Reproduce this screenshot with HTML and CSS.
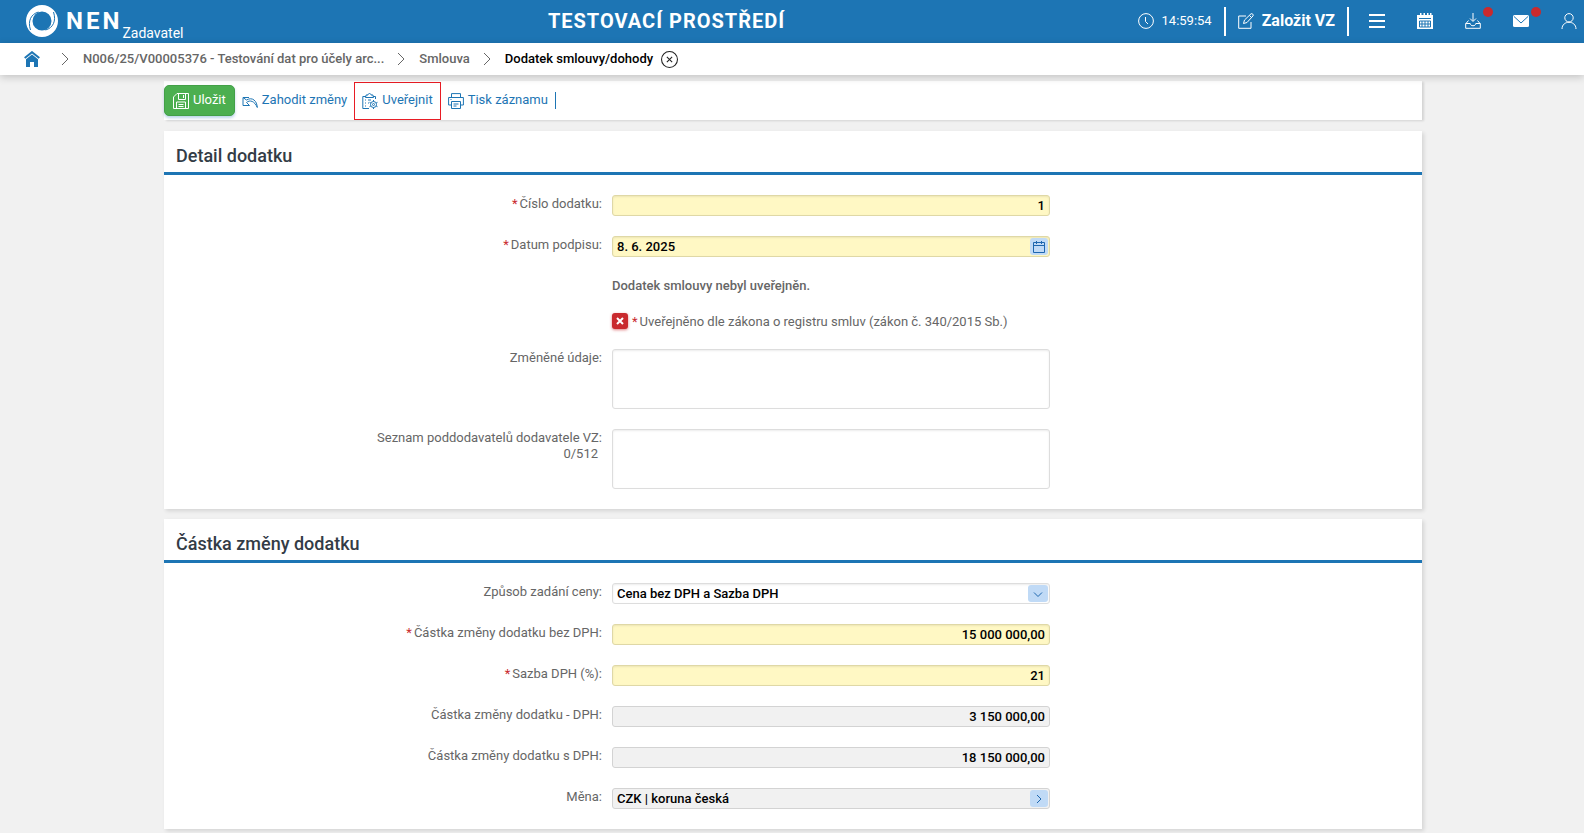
FILE: index.html
```html
<!DOCTYPE html>
<html lang="cs">
<head>
  <meta charset="UTF-8">
  <meta name="viewport" content="width=device-width, initial-scale=1.0">
  <title>Dodatek smlouvy/dohody - NEN</title>
  <link rel="stylesheet" href="styles.css">
</head>
<body>

<header class="topbar">
  <a href="#" class="brand">
    <svg class="brand-logo" viewBox="0 0 32 32" aria-hidden="true">
      <path fill="#fff" fill-rule="evenodd" d="M16 0a16 16 0 1 1 0 32a16 16 0 1 1 0-32zM16 6.500a9.500 9.500 0 1 0 0 19a9.500 9.500 0 1 0 0-19z"/>
      <path class="logo-cut" d="M4.500 25C1.500 16 5 9 12.500 7M27.500 7C30.500 16 27 23 19.500 25"/>
    </svg>
    <span class="brand-name">NEN</span>
    <span class="brand-role">Zadavatel</span>
  </a>

  <h1 class="env-title">TESTOVACÍ PROSTŘEDÍ</h1>

  <div class="clock">
    <svg class="icon" viewBox="0 0 16 16" aria-hidden="true">
      <circle cx="8" cy="8" r="7.400"/><path d="M7.500 4v4.500l2.500 2.500"/>
    </svg>
    <time>14:59:54</time>
  </div>

  <button type="button" class="create">
    <svg class="icon" viewBox="0 0 16 16" aria-hidden="true">
      <path d="M8 3H.7v12.300H13V9M5.500 10.500l1-3.500L13 .8c1-.8 3 1 2 2.100L9 9.500zM11.500 2.500l2 2"/>
    </svg>
    Založit VZ
  </button>

  <nav class="tools">
    <button type="button" class="tool" aria-label="Menu">
      <svg class="icon" viewBox="0 0 16 16"><path class="bars" d="M0 2h16M0 8h16M0 14h16"/></svg>
    </button>
    <button type="button" class="tool" aria-label="Kalendář">
      <svg class="icon" viewBox="0 0 16 16">
        <path class="solid" d="M0 2h3V0h1.500v2h2V0H8v2h2V0h1.500v2H13V0h1.500v2H16v14H0z"/>
        <path class="calendar-grid" d="M2 5.500h12M2.500 8v6h11V8zM2.500 11h11M5 8v6M8 8v6M11 8v6"/>
      </svg>
    </button>
    <button type="button" class="tool" aria-label="Stažené soubory">
      <svg class="icon" viewBox="0 0 16 16">
        <path d="M8 0v8M5 5.500l3 3 3-3M3.500 7.500l-2.500 3M12.500 7.500l2.500 3M.7 10.500h4.500c0 3 5.600 3 5.600 0h4.500v4.800H.7z"/>
      </svg>
      <span class="badge"></span>
    </button>
    <button type="button" class="tool" aria-label="Zprávy">
      <svg class="icon" viewBox="0 0 16 16">
        <rect class="solid" y="2" width="16" height="12" rx="1.500"/>
        <path class="flap" d="M1 3.500l7 6.500 7-6.500"/>
      </svg>
      <span class="badge"></span>
    </button>
    <button type="button" class="tool" aria-label="Uživatel">
      <svg class="icon" viewBox="0 0 16 16">
        <circle cx="8" cy="4.800" r="4.200"/><path d="M1 16c0-9 14-9 14 0"/>
      </svg>
    </button>
  </nav>
</header>

<nav class="breadcrumb" aria-label="Drobečková navigace">
  <a href="#" class="home" aria-label="Domů">
    <svg viewBox="0 0 16 16">
      <path class="home-roof" d="M.7 7L8 1.200 15.300 7"/>
      <path fill="#1d75b4" d="M2 8.300L8 3.500l6 4.800V16h-4v-5H6v5H2z"/>
    </svg>
  </a>
  <svg class="sep" viewBox="0 0 8 12" aria-hidden="true"><path d="M1 0l6 6-6 6"/></svg>
  <a href="#">N006/25/V00005376 - Testování dat pro účely arc...</a>
  <svg class="sep" viewBox="0 0 8 12" aria-hidden="true"><path d="M1 0l6 6-6 6"/></svg>
  <a href="#">Smlouva</a>
  <svg class="sep" viewBox="0 0 8 12" aria-hidden="true"><path d="M1 0l6 6-6 6"/></svg>
  <span class="current" aria-current="page">Dodatek smlouvy/dohody</span>
  <button type="button" class="close" aria-label="Zavřít">
    <svg viewBox="0 0 16 16"><circle cx="8" cy="8" r="7.500"/><path d="M5.500 5.500l5 5M10.500 5.500l-5 5"/></svg>
  </button>
</nav>

<main>
  <div class="toolbar">
    <button type="button" class="action save">
      <svg class="icon" viewBox="0 0 16 16" aria-hidden="true">
        <path d="M.5 4L4 .5h11.500v15H.5zM5.500 .5v6h7v-6M10.500 2v3M3.500 15.500V9h9v6.500M5.500 11.500h5M5.500 13.500h5"/>
      </svg>
      <span>Uložit</span>
    </button>
    <button type="button" class="action">
      <svg class="icon" viewBox="0 0 16 16" aria-hidden="true">
        <path d="M7 4.500H1v8h6.500L4.500 9.500C8 6.500 12.500 8 15.300 14.500C15 8 10.500 3.500 4.500 7L1 4.500"/>
      </svg>
      <span>Zahodit změny</span>
    </button>
    <button type="button" class="action highlighted">
      <svg class="icon" viewBox="0 0 16 16" aria-hidden="true">
        <path d="M7 15.500H.8v-12H4V2h2c0-2 3-2 3 0h2v1.500h2.500V6M3.500 3.500v1h8v-1M3 7h1M6 7h3M3 10h1M6 10h1M3 13h1"/>
        <circle cx="11.500" cy="11.500" r="3"/><circle cx="11.500" cy="11.500" r="1"/>
        <path d="M11.500 7v1.500M11.500 14.500V16M7.500 9.300l1.400.8M14.100 12.900l1.400.8M7.500 13.700l1.400-.8M14.100 10.100l1.400-.8"/>
      </svg>
      <span>Uveřejnit</span>
    </button>
    <button type="button" class="action">
      <svg class="icon" viewBox="0 0 16 16" aria-hidden="true">
        <path d="M3.500 4V.6h9V4M3.500 12H.6V4.500h14.800V12h-2.900M3.500 8.500h9v7h-9zM5.500 11h5M5.500 13h3M2.500 6.500h1"/>
      </svg>
      <span>Tisk záznamu</span>
    </button>
    <span class="toolbar-end"></span>
  </div>

  <form>
    <section class="panel">
      <h2>Detail dodatku</h2>
      <div class="fields">
        <div class="row">
          <label for="cislo"><i>*</i>Číslo dodatku:</label>
          <input type="text" id="cislo" class="required number" value="1">
        </div>
        <div class="row">
          <label for="datum"><i>*</i>Datum podpisu:</label>
          <div class="control">
            <input type="text" id="datum" class="required" value="8. 6. 2025">
            <button type="button" class="picker" aria-label="Vybrat datum">
              <svg viewBox="0 0 12 12"><path d="M.5 1.500h11v10H.5zM.5 4.500h11M3.500 0v3M8.500 0v3"/></svg>
            </button>
          </div>
        </div>
        <div class="row">
          <strong class="note">Dodatek smlouvy nebyl uveřejněn.</strong>
        </div>
        <div class="row">
          <div class="check">
            <span class="check-box">
              <input type="checkbox" id="registr">
              <svg viewBox="0 0 8 8" aria-hidden="true"><path d="M1 1l6 6M7 1L1 7"/></svg>
            </span>
            <label for="registr"><i>*</i>Uveřejněno dle zákona o registru smluv (zákon č. 340/2015 Sb.)</label>
          </div>
        </div>
        <div class="row">
          <label for="udaje">Změněné údaje:</label>
          <textarea id="udaje"></textarea>
        </div>
        <div class="row">
          <label for="seznam">Seznam poddodavatelů dodavatele VZ: <span class="counter">0/512</span></label>
          <textarea id="seznam" maxlength="512"></textarea>
        </div>
      </div>
    </section>

    <section class="panel">
      <h2>Částka změny dodatku</h2>
      <div class="fields">
        <div class="row">
          <label for="zpusob">Způsob zadání ceny:</label>
          <div class="control">
            <select id="zpusob">
              <option>Cena bez DPH a Sazba DPH</option>
            </select>
            <span class="picker picker-select">
              <svg viewBox="0 0 12 12"><path d="M2 4.500l4 4 4-4"/></svg>
            </span>
          </div>
        </div>
        <div class="row">
          <label for="bez-dph"><i>*</i>Částka změny dodatku bez DPH:</label>
          <input type="text" id="bez-dph" class="required number" value="15 000 000,00">
        </div>
        <div class="row">
          <label for="sazba"><i>*</i>Sazba DPH (%):</label>
          <input type="text" id="sazba" class="required number" value="21">
        </div>
        <div class="row">
          <label for="dph">Částka změny dodatku - DPH:</label>
          <input type="text" id="dph" class="number" value="3 150 000,00" readonly>
        </div>
        <div class="row">
          <label for="s-dph">Částka změny dodatku s DPH:</label>
          <input type="text" id="s-dph" class="number" value="18 150 000,00" readonly>
        </div>
        <div class="row">
          <label for="mena">Měna:</label>
          <div class="control">
            <input type="text" id="mena" value="CZK | koruna česká" readonly>
            <button type="button" class="picker" aria-label="Detail měny">
              <svg viewBox="0 0 12 12"><path d="M4 2l4 4-4 4"/></svg>
            </button>
          </div>
        </div>
      </div>
    </section>
  </form>
</main>

</body>
</html>
```
FILE: styles.css
```css
* { box-sizing: border-box }

body {
  margin: 0;
  background: #f1f1f1;
  color: #666;
  font-family: Roboto, Arial, sans-serif;
  font-size: 13px;
  line-height: 16px;
}

a {
  color: inherit;
  text-decoration: none;
}

button {
  padding: 0;
  border: 0;
  background: none;
  color: inherit;
  font: inherit;
  cursor: pointer;
}

svg {
  display: block;
  flex: none;
  fill: none;
  stroke: currentColor;
}

.icon {
  width: 16px;
  height: 16px;
}


/* Top bar */

.topbar {
  display: flex;
  align-items: center;
  height: 43px;
  padding: 0 7px 1px 26px;
  background: #1d75b4;
  color: #fff;
}

.brand {
  display: flex;
  align-items: center;
}

.brand-logo {
  width: 32px;
  height: 32px;
  margin-right: 8px;
  stroke: none;
}

.logo-cut {
  stroke: #1d75b4;
  stroke-width: 1;
}

.brand-name {
  font-size: 24px;
  font-weight: 700;
  letter-spacing: 3px;
}

.brand-role {
  align-self: flex-end;
  padding-top: 24px;
  font-size: 14px;
}

.env-title {
  flex: 1;
  margin: 0;
  padding-left: 12px;
  font-size: 20px;
  font-weight: 700;
  letter-spacing: 1px;
  text-align: center;
}

.clock {
  display: flex;
  align-items: center;
  gap: 8px;
  margin-right: 12px;
}

.create {
  display: flex;
  align-items: center;
  gap: 8px;
  height: 29px;
  padding: 0 12px;
  border: solid #fff;
  border-width: 0 2px;
  font-size: 16px;
  font-weight: 700;
}

.tools {
  display: flex;
  gap: 32px;
  margin-left: 20px;
}

.tool {
  position: relative;
}

.bars {
  stroke-width: 2;
}

.solid {
  fill: #fff;
  stroke: none;
}

.calendar-grid,
.flap {
  stroke: #1d75b4;
}

.badge {
  position: absolute;
  top: -6px;
  right: -12px;
  width: 10px;
  height: 10px;
  border-radius: 50%;
  background: #c92a2e;
}


/* Breadcrumb */

.breadcrumb {
  position: relative;
  display: flex;
  align-items: center;
  height: 32px;
  padding: 0 24px;
  background: #fff;
  box-shadow: 0 2px 8px rgba(0, 0, 0, 0.2);
  font-weight: 500;
}

.home svg {
  width: 16px;
  height: 16px;
  stroke: none;
}

.home .home-roof {
  stroke: #1d75b4;
  stroke-width: 2;
}

.sep {
  width: 8px;
  height: 12px;
  margin: 0 14px 0 13px;
}

.home + .sep {
  margin-left: 21px;
}

.current {
  color: #000;
}

.close {
  margin-left: 8px;
  color: #222;
}

.close svg {
  width: 17px;
  height: 17px;
}


/* Toolbar */

main {
  padding: 6px 162px 4px 164px;
}

.toolbar {
  display: flex;
  align-items: center;
  height: 39px;
  margin-bottom: 11px;
  background: #fff;
  box-shadow: 2px 1px 2px rgba(0, 0, 0, 0.12);
  color: #1d75b4;
}

.action {
  display: flex;
  align-items: center;
  gap: 4px;
  height: 31px;
  padding: 0 7px;
}

.action span {
  padding-bottom: 2px;
}

.save {
  padding: 0 8px;
  border: 1px solid #43a047;
  border-radius: 5px;
  background: #4caf50;
  box-shadow: 0 2px 3px rgba(29, 117, 180, 0.3);
  color: #fff;
}

.highlighted {
  height: 38px;
  border: 1px solid #e81c24;
}

.toolbar-end {
  width: 1px;
  height: 17px;
  background: #1d75b4;
}


/* Panels */

.panel {
  margin-bottom: 10px;
  background: #fff;
  box-shadow: 2px 2px 4px rgba(0, 0, 0, 0.12);
}

.panel:last-child {
  margin-bottom: 0;
}

.panel h2 {
  margin: 0;
  padding: 15px 12px 6px;
  border-bottom: 3px solid #1d75b4;
  color: #333c46;
  font-size: 18px;
  font-weight: 500;
  line-height: 20px;
}

.fields {
  display: grid;
  gap: 20px;
  padding: 20px 0;
}

.row {
  display: grid;
  grid-template-columns: 438fr 438fr 362fr;
  gap: 10px;
}

.row label {
  padding-top: 1px;
}

.row > label {
  text-align: right;
}

.row i {
  margin-right: 2px;
  color: #c92a2e;
  font-style: normal;
}

.note,
.check {
  grid-column: 2;
  height: 16px;
}

.note {
  padding-top: 1px;
  font-weight: 500;
}

.counter {
  display: block;
  padding-right: 4px;
}


/* Inputs */

.row input[type="text"],
select,
textarea {
  display: block;
  width: 100%;
  height: 21px;
  margin: 0;
  padding: 0 4px;
  border: 1px solid #ddd;
  border-radius: 3px;
  background: #fff;
  box-shadow: inset 0 1px 2px rgba(0, 0, 0, 0.08);
  color: #000;
  font: 500 13px Roboto, Arial, sans-serif;
  appearance: none;
}

.row textarea {
  height: 60px;
  resize: none;
}

.row select {
  padding-bottom: 1px;
}

.row input.required {
  border-color: #dfd8a6;
  background: #fff8c4;
}

.row input[readonly] {
  border-color: #d3d3d3;
  background: #f1f1f1;
  box-shadow: none;
}

.row .number {
  text-align: right;
}

.control {
  position: relative;
}

/* small blue button lying over the right end of a field */
.picker {
  position: absolute;
  top: 2px;
  right: 2px;
  display: grid;
  place-items: center;
  width: 18px;
  height: 17px;
  border-radius: 3px;
  background: #c0daf6;
  color: #1d66ae;
}

.picker svg {
  width: 12px;
  height: 12px;
}

.picker-select {
  width: 20px;
  pointer-events: none;
}

.check {
  display: flex;
  gap: 4px;
}

.check-box {
  display: grid;
  place-items: center;
}

.check-box > * {
  grid-area: 1 / 1;
}

.check-box input {
  width: 16px;
  height: 16px;
  margin: 0;
  border-radius: 3px;
  background: #c92a2e;
  box-shadow: 0 1px 3px rgba(201, 42, 46, 0.6);
  appearance: none;
}

.check-box svg {
  z-index: 1;
  width: 8px;
  height: 8px;
  color: #fff;
  stroke-width: 2;
  pointer-events: none;
}
```
